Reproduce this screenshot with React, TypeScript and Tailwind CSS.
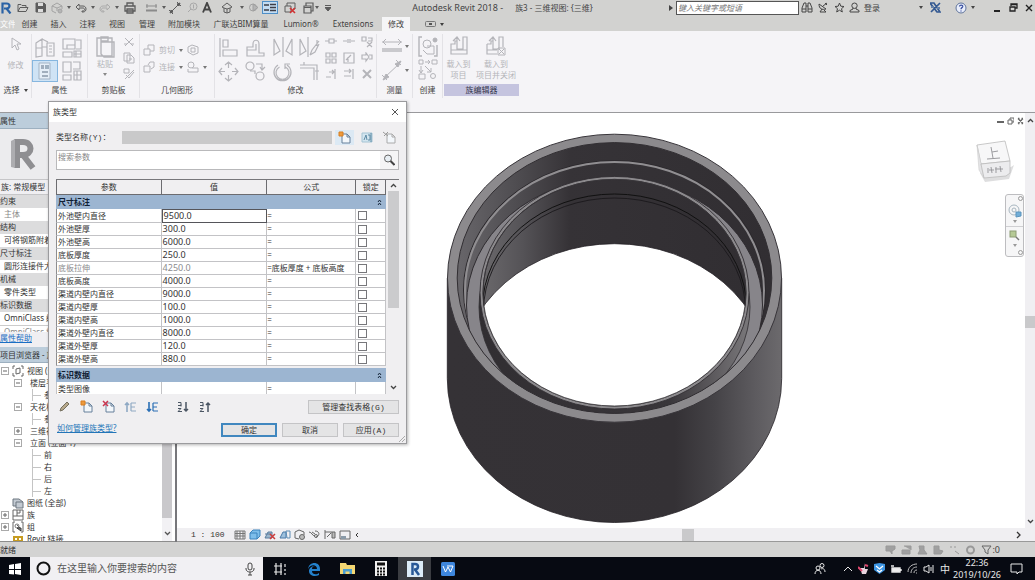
import React, { useState } from "react";

type IconProps = { w?: number; h?: number; vb?: string; className?: string; children?: React.ReactNode };

function Svg({ w = 16, h = 16, vb, className = "", children }: IconProps) {
  return (
    <svg
      width={w}
      height={h}
      viewBox={vb ?? `0 0 ${w} ${h}`}
      className={`shrink-0 ${className}`}
      fill="none"
      stroke="currentColor"
      strokeWidth="1"
      aria-hidden="true"
    >
      {children}
    </svg>
  );
}

function Caret({ className = "" }: { className?: string }) {
  return (
    <Svg w={4} h={3} className={className}>
      <path d="M0 0h4L2 3z" fill="currentColor" stroke="none" />
    </Svg>
  );
}

function Tool({ label, className = "", children }: { label: string; className?: string; children: React.ReactNode }) {
  return (
    <button type="button" aria-label={label} className={`flex shrink-0 items-center justify-center ${className}`}>
      {children}
    </button>
  );
}

/* ---------- title bar ---------- */

function QuickAccess() {
  return (
    <div className="flex h-full shrink-0 items-center text-[#5c5c5c]">
      <Tool label="Revit" className="w-[14px] justify-start">
        <Svg w={12} h={12}>
          <path d="M2.500 11.500V1.500h4c4 0 4 5 0 5H4M6.500 6.500l4 5" stroke="#2a62a5" strokeWidth="2.200" />
        </Svg>
      </Tool>
      <Tool label="打开" className="w-[18px]">
        <Svg w={12} h={10}>
          <path d="M1 8.500V1.500h3l1 1h4v2M1 8.500l2-4h8l-2 4z" />
        </Svg>
      </Tool>
      <Tool label="保存" className="w-4">
        <Svg w={11} h={11}>
          <path d="M1 1h8l1.500 1.500V10H1z" fill="#5c5c5c" />
          <path d="M3 1v3h5V1zM3 7h5v3H3z" fill="#dcdcdc" stroke="none" />
        </Svg>
      </Tool>
      <Tool label="同步" className="w-[18px] text-[#a3a3a3]">
        <Svg w={12} h={12}>
          <path d="M1 4l5-3 5 3v3M1 4v5l4 2M1 4l5 2 5-2M6 6v3" />
          <circle cx="9" cy="9" r="2" fill="#b5b5b5" />
        </Svg>
      </Tool>
      <Tool label="同步选项" className="w-[6px]"><Caret /></Tool>
      <Tool label="放弃" className="w-[18px]">
        <Svg w={12} h={10}>
          <path d="M4 1L1 4l3 3V5h4c2 0 2 3 0 3H7v1h1c4 0 4-6 0-6H4z" />
        </Svg>
      </Tool>
      <Tool label="放弃选项" className="w-[6px]"><Caret /></Tool>
      <Tool label="重做" className="w-[18px] text-[#ababab]">
        <Svg w={12} h={10}>
          <path d="M8 1l3 3-3 3V5H4C2 5 2 8 4 8h1v1H4C0 9 0 3 4 3h4z" />
        </Svg>
      </Tool>
      <Tool label="重做选项" className="w-[6px]"><Caret /></Tool>
      <Tool label="打印" className="w-5">
        <Svg w={12} h={12}>
          <path d="M3 4V1h6v3M1 4h10v5H1zM3 7h6v4H3z" strokeWidth="1.300" />
        </Svg>
      </Tool>
      <Tool label="测量" className="w-[22px] text-[#8b8b8b]">
        <Svg w={11} h={8}>
          <path d="M0 2h11M1 0v4M10 0v4" />
          <path d="M0 6.500h11" strokeWidth="2" />
        </Svg>
      </Tool>
      <Tool label="测量选项" className="w-1"><Caret /></Tool>
      <Tool label="对齐尺寸标注" className="w-[18px]">
        <Svg w={12} h={12}>
          <path d="M2 10l8-8M0 8l4 4M8 0l4 4" />
          <path d="M1 11l3-1-2-2zM11 1L8 2l2 2z" fill="currentColor" />
        </Svg>
      </Tool>
      <Tool label="标记" className="w-4 text-[#a8a8a8]">
        <Svg w={11} h={11}>
          <circle cx="6.500" cy="4.500" r="3.500" />
          <path d="M6.500 2.500v4M1 10l3-3" />
        </Svg>
      </Tool>
      <Tool label="文字" className="w-[14px]">
        <Svg w={10} h={11}>
          <path d="M1 10.500L5 1l4 9.500M2.500 7.500h5" stroke="#444" strokeWidth="1.900" />
        </Svg>
      </Tool>
      <Tool label="三维视图" className="w-[26px]">
        <Svg w={12} h={12}>
          <path d="M1 5l5-4 5 4-2 1v4l-3 1-3-1V6zM3 6l3 1 3-1M6 7v4" />
        </Svg>
      </Tool>
      <Tool label="三维选项" className="w-1"><Caret /></Tool>
      <Tool label="剖面" className="w-[18px] text-[#a0a0a0]">
        <Svg w={11} h={11}>
          <circle cx="5" cy="5.500" r="3.500" />
          <path d="M5 2v7l5-3.500z" fill="#b5b5b5" />
        </Svg>
      </Tool>
      <Tool label="细线" className="h-[13px] w-4 border border-[#4f8fc7] bg-[#c3dcf2]">
        <Svg w={12} h={9}>
          <path d="M0 2h5M0 7h5M6 1.500h6M6 4.500h6M6 7.500h6" stroke="#3d3d46" strokeWidth="1.500" />
        </Svg>
      </Tool>
      <Tool label="关闭隐藏窗口" className="w-[24px]">
        <Svg w={12} h={12}>
          <path d="M3 4V1h8v6H9M1 4h6v6H1z" />
          <path d="M6 6l5 5M11 6l-5 5" stroke="#d03232" strokeWidth="1.600" />
        </Svg>
      </Tool>
      <Tool label="切换窗口" className="w-[12px]">
        <Svg w={11} h={12}>
          <path d="M3 4V1h7v8H8M1 4h7v7H1zM1 5.500h7" strokeWidth="1.200" />
        </Svg>
      </Tool>
      <Tool label="窗口选项" className="w-[6px]"><Caret /></Tool>
      <Tool label="自定义" className="w-4">
        <Svg w={6} h={6}>
          <path d="M0 .5h6M0 2.500h6L3 6z" fill="currentColor" />
        </Svg>
      </Tool>
    </div>
  );
}

function TitleBar() {
  return (
    <header className="flex h-[15px] shrink-0 items-center bg-[#d2d2d0] text-[9px] leading-3 text-[#454545]">
      <QuickAccess />
      <div className="flex flex-1 items-center justify-center gap-3 whitespace-nowrap">
        <span>Autodesk Revit 2018 -</span>
        <span className="text-[8px]">族3 - 三维视图: {"{三维}"}</span>
      </div>
      <Svg w={4} h={6} className="mr-[3px]">
        <path d="M0 0l4 3-4 3z" fill="#444" stroke="none" />
      </Svg>
      <input
        aria-label="搜索帮助"
        placeholder="键入关键字或短语"
        className="h-[14px] w-[123px] shrink-0 border border-[#555] bg-white px-[1px] text-[8px] italic outline-none placeholder:text-[#777]"
      />
      <div className="flex shrink-0 items-center gap-1 pl-[2px]">
        <Tool label="搜索" className="w-3">
          <Svg w={12} h={11}>
            <path d="M1 10V6l2-5h2v9zM11 10V6L9 1H7v9zM5 4h2M1 7h4M7 7h4" />
          </Svg>
        </Tool>
        <Tool label="通讯中心" className="w-3">
          <Svg w={10} h={11}>
            <path d="M1 2c0 5 3 6 7 5L1 2zM5 4l4-3M4 7l-2 3h6L6 8M7 1l2 2" />
          </Svg>
        </Tool>
        <Tool label="收藏夹" className="w-3">
          <Svg w={11} h={11}>
            <path d="M5.500 1l1.300 3.200 3.200.3-2.500 2.200.8 3.300-2.800-1.800L2.700 10l.8-3.300L1 4.500l3.200-.3z" />
          </Svg>
        </Tool>
        <button type="button" className="flex items-center gap-1 text-[8px] leading-3">
          <Svg w={11} h={11}>
            <circle cx="5.500" cy="3.700" r="2.700" />
            <path d="M4 6v1L1 8.500V10h9V8.500L7 7V6" />
          </Svg>
          登录
        </button>
      </div>
      <div className="flex w-[155px] shrink-0 items-center justify-end gap-1">
        <Caret />
        <Tool label="Exchange" className="w-4">
          <Svg w={11} h={11}>
            <path d="M0 1h4l6 9H7zM10 1L1 10" stroke="#355a92" strokeWidth="1.700" />
            <path d="M1 5h3M7 6h3" stroke="#6682a9" strokeWidth="2" />
          </Svg>
        </Tool>
        <Tool label="帮助" className="ml-2 w-3">
          <Svg w={12} h={12}>
            <circle cx="6" cy="6" r="5" fill="#e9eefb" stroke="#61759b" />
            <path d="M4.500 4.500C4.500 2.500 8 2.700 7.700 4.700 7.500 5.700 6 5.700 6 7.200M6 8.500v1" stroke="#3b50a0" strokeWidth="1.300" />
          </Svg>
        </Tool>
        <Caret />
        <Tool label="最小化" className="ml-3 w-3">
          <Svg w={6} h={8}><path d="M0 7h6" stroke="#222" strokeWidth="2" /></Svg>
        </Tool>
        <Tool label="还原" className="w-3">
          <Svg w={9} h={9}><path d="M2 3V1h6v4H6M1 4h5v4H1zM2 1.500h6M1 4h5" stroke="#222" strokeWidth="1.300" /></Svg>
        </Tool>
        <Tool label="关闭" className="w-3">
          <Svg w={8} h={8}><path d="M1 1l6 6M7 1L1 7" stroke="#222" strokeWidth="1.400" /></Svg>
        </Tool>
      </div>
    </header>
  );
}

/* ---------- ribbon ---------- */

const tabs = [
  { name: "创建", cls: "w-[29px]" },
  { name: "插入", cls: "w-[29px]" },
  { name: "注释", cls: "w-[29px]" },
  { name: "视图", cls: "w-[30px]" },
  { name: "管理", cls: "w-[30px]" },
  { name: "附加模块", cls: "w-[44px]" },
  { name: "广联达BIM算量", cls: "w-[70px]" },
  { name: "Lumion®", cls: "w-[50px]" },
  { name: "Extensions", cls: "w-[54px]" },
];

function TabRow() {
  return (
    <nav className="flex h-4 shrink-0 items-end bg-[#d2d2d0] text-[8px] leading-[14px] text-[#3f3f3f]">
      <button type="button" className="w-[15px] overflow-hidden whitespace-nowrap text-left text-white">文件</button>
      {tabs.map((t) => (
        <button type="button" key={t.name} className={`shrink-0 whitespace-nowrap text-center ${t.cls}`}>
          {t.name}
        </button>
      ))}
      <button type="button" className="ml-[2px] w-7 shrink-0 bg-[#f5f5f6] text-center">修改</button>
      <button type="button" aria-label="显示选项" className="ml-[15px] flex h-[14px] items-center gap-1">
        <Svg w={11} h={6}>
          <rect x=".5" y=".5" width="10" height="5" rx="1" stroke="#777" />
          <path d="M4 3h3" stroke="#555" strokeWidth="2" />
        </Svg>
        <Caret />
      </button>
    </nav>
  );
}

function Group({ title, className, titleClass = "", children }: { title: React.ReactNode; className: string; titleClass?: string; children: React.ReactNode }) {
  return (
    <section className={`flex shrink-0 flex-col ${className}`}>
      <div className="flex h-12 gap-px pt-[2px]">{children}</div>
      <div className={`mt-[2px] flex h-3 shrink-0 items-center justify-center gap-1 text-[8px] leading-3 text-[#444] ${titleClass}`}>{title}</div>
    </section>
  );
}

function Divider() {
  return <div className="h-16 w-px shrink-0 bg-[#e3e2e6]" />;
}

const modifyLarge: { label: string; d: string }[] = [
  { label: "对齐", d: "M2 1v19M5 3h5v7H5zM5 13h14v6H5z" },
  { label: "偏移", d: "M2 19h17v-3h-5V7c0-5-6-5-6 0v3H2zM2 13h9V7" },
  { label: "镜像 - 拾取轴", d: "M11 0v20M2 2v16l6-4zM20 2v16l-6-4z" },
  { label: "镜像 - 绘制轴", d: "M9 0v20M1 2v16l6-4zM18 3v6M11 18l2-5 7-9M11 18l5-3 4-8" },
  { label: "移动", d: "M10.500 1v6M10.500 14v6M1 10.500h6M14 10.500h6M7 4l3.500-3L14 4M7 17l3.500 3 3.500-3M4 7l-3 3.500L4 14M17 7l3 3.500-3 3.500" },
  { label: "复制", d: "M9 5a4 4 0 1 0-8 0 4 4 0 0 0 8 0M19 15a4 4 0 1 0-8 0 4 4 0 0 0 8 0M11 3h6v5M15 6l2 3 3-3M5 10h5v3" },
  { label: "旋转", d: "M6 4a8.500 8.500 0 1 0 9 0M7.500 6a6.500 6.500 0 1 0 6 0M13 8V3h5" },
  { label: "修剪", d: "M1 4h17v15M1 7h14v12M5 1v3M20 10h-4" },
];

const modifySmall = [
  "M0 5h4M4 3h5v4H4zM9 5h3",
  "M0 5h4M5 3v4M7 3v4M8 5h4",
  "M1 1h4v4H1zM7 2h4v3H7M6 6l5 5M11 6l-5 5",
  "M1 1h4v4H1zM7 1h4v4H7zM1 7h4v4H1zM7 7h4v4H7z",
  "M1 1h10v10H1zM3 8l5-5M5 5v5",
  "M1 3h4V1l3 4-3 4V7H1zM8 3h3v4H8",
  "M1 9h5M10 1v10M4 4h5M7 2l2 2-2 2",
  "M1 3h7M1 8h7M10 1v10M6 1l2 2-2 2",
  "M2 2l8 8M10 2l-8 8",
];

function Ribbon() {
  return (
    <div className="flex h-[81px] shrink-0 bg-[#f5f4f7] pt-[3px] text-[8px] leading-[10px] text-[#b4b4b9]">
      <Group className="w-[31px]" title={<><span>选择</span><Caret /></>}>
        <button type="button" className="flex w-full flex-col items-center gap-2 pt-[1px]">
          <Svg w={12} h={15}><path d="M2 1v10l3-3 2 5 2-1-2-5h4z" /></Svg>
          修改
        </button>
      </Group>
      <Divider />
      <Group className="w-[55px]" title="属性">
        <div className="grid grid-cols-2 gap-x-[1px]">
          <Tool label="类型属性" className="h-[23px] w-[26px]">
            <Svg w={20} h={20}><path d="M1 5l6-4v17l-6 1zM7 1l6 3M7 9h5M12 5h7v13h-7zM14 8h3M14 11h3M14 14h3M1 10h6" strokeWidth="1.200" /></Svg>
          </Tool>
          <Tool label="族类型" className="h-[23px] w-[26px]">
            <Svg w={20} h={20}><path d="M1 1h12v10H1zM5 11V7h8M1 14h9v5H1zM14 2h5v9h-5M12 13h7v6h-7zM14 13v6M12 16h7" strokeWidth="1.200" /></Svg>
          </Tool>
          <Tool label="属性" className="h-[22px] w-[26px] border border-[#86b6df] bg-[#cfe3f5]">
            <Svg w={16} h={18}><path d="M2 1h11v16H2z" fill="#e5eef7" stroke="#a3b3c5" /><path d="M4 4h3M4 6h3M5 10h6M5 14h6" stroke="#8b99aa" strokeWidth="1.500" /><path d="M8 3h4v4H8z" fill="#9fb0c0" stroke="none" /></Svg>
          </Tool>
          <Tool label="族类别" className="h-[22px] w-[26px]">
            <Svg w={20} h={20}><path d="M1 1h8v10H1zM1 14h8v5H1zM11 1h7v7h-7M12 10h7v9h-7zM12 14h7M15 10v9" strokeWidth="1.200" /></Svg>
          </Tool>
        </div>
      </Group>
      <Divider />
      <Group className="w-[51px]" title="剪贴板">
        <button type="button" className="flex w-[34px] flex-col items-center">
          <Svg w={20} h={22}><path d="M2 2h15v18H2zM6 1h7v4H6zM6 6h13v15H9l-3-3z" strokeWidth="1.400" /></Svg>
          <span className="pt-px">粘贴</span>
          <Caret className="mt-1 text-[#888]" />
        </button>
        <div className="flex flex-col items-center gap-1">
          <Tool label="剪切" className="h-3 w-3"><Svg w={12} h={12}><path d="M2 2l8 8M10 2l-8 8M1 8h3M8 8h3" /></Svg></Tool>
          <Tool label="复制" className="h-3 w-3"><Svg w={12} h={12}><path d="M1 1h6v8H1zM4 3h4l3 3v5H4zM6 7h3" /></Svg></Tool>
          <Tool label="匹配类型" className="h-3 w-3"><Svg w={12} h={12}><path d="M1 1h5v4H1zM11 2L5 8l-3 3M3 7l3 3 5-6" /></Svg></Tool>
        </div>
      </Group>
      <Divider />
      <Group className="w-[74px]" title="几何图形">
        <div className="grid grid-cols-[17px_20px_8px_16px_8px] content-start items-center gap-y-[5px] pt-2">
          <Svg w={12} h={12} className="mx-auto"><path d="M1 5h6v6H1zM5 5V1h6v6H7" /></Svg>
          <button type="button">剪切</button>
          <Caret className="mx-auto text-[#777]" />
          <Svg w={12} h={12} className="mx-auto"><path d="M1 3l4-2 6 2v6l-5 2-5-3zM4 4h4v4H4z" /></Svg>
          <span />
          <Svg w={12} h={12} className="mx-auto"><path d="M1 5h6v6H1zM5 4l2-3h4v5L8 8" /></Svg>
          <button type="button">连接</button>
          <Caret className="mx-auto text-[#777]" />
          <Svg w={12} h={12} className="mx-auto"><circle cx="4" cy="4" r="3" /><path d="M5 7h6v4H1V8" /></Svg>
          <Caret className="mx-auto text-[#777]" />
        </div>
      </Group>
      <Divider />
      <Group className="w-[161px]" title="修改">
        <div className="grid grid-cols-4 gap-x-[5px] gap-y-[2px] pl-[2px]">
          {modifyLarge.map((m) => (
            <Tool key={m.label} label={m.label} className="w-[22px]">
              <Svg w={21} h={21}><path d={m.d} strokeWidth="1.200" /></Svg>
            </Tool>
          ))}
        </div>
        <div className="grid grid-cols-3 content-start gap-x-[6px] gap-y-1 pl-[4px]">
          {modifySmall.map((d, i) => (
            <Tool key={d} label={`修改工具 ${i + 1}`} className="w-3">
              <Svg w={12} h={12}><path d={d} strokeWidth={i === 8 ? 2 : 1.2} /></Svg>
            </Tool>
          ))}
        </div>
      </Group>
      <Divider />
      <Group className="w-[35px]" title="测量">
        <div className="grid grid-cols-[26px_4px] items-center gap-y-[2px] pl-[2px]">
          <Svg w={20} h={20} className="mx-auto"><path d="M0 5h20M4 2L1 5l3 3M16 2l3 3-3 3" /><path d="M0 13h20" strokeWidth="4" stroke="#c9c9cd" /></Svg>
          <Caret className="text-[#777]" />
          <Svg w={20} h={21} className="mx-auto"><path d="M2 18L18 3M0 15l5 5M14 0l5 5" /><path d="M1 20l6-3-3-3zM19 1l-6 3 3 3z" fill="#b4b4b9" /></Svg>
          <Caret className="text-[#777]" />
        </div>
      </Group>
      <Divider />
      <Group className="w-[29px]" title="创建">
        <div className="flex w-full flex-col items-center gap-[2px]">
          <Tool label="创建组"><Svg w={20} h={21}><path d="M4 1H1v19h3M16 20h3V9" strokeWidth="1.400" /><circle cx="9" cy="8" r="4" /><path d="M9 10h7v8H9l-4-4" /><circle cx="17" cy="4" r="2" fill="#b4b4b9" /></Svg></Tool>
          <Tool label="创建类似"><Svg w={20} h={21}><path d="M1 1h4v4H1zM14 1h5v4h-5zM7 3h5M10 1l2 2-2 2M3 7v7M1 11l2 3 2-3M7 7l6 6M13 9v4H9M1 15h6v5H1z" /><circle cx="15" cy="17" r="2.500" /></Svg></Tool>
        </div>
      </Group>
      <Divider />
      <Group className="w-[76px]" titleClass="bg-[#c5c4df] text-[#34344c] ml-px" title="族编辑器">
        <button type="button" className="flex w-[31px] flex-col items-center">
          <Svg w={18} h={20}><path d="M1 8h4V5h2v8h6V1h4v17H1zM1 14h16M3 5l4-4 3 4M7 1v5" strokeWidth="1.200" /></Svg>
          <span className="pt-[2px] leading-[11px]">载入到<br />项目</span>
        </button>
        <button type="button" className="flex w-[42px] flex-col items-center whitespace-nowrap">
          <Svg w={20} h={20}><path d="M1 8h4V5h2v8h6V1h4v10M1 8v10h10M1 14h10M3 5l4-4 3 4M7 1v5" strokeWidth="1.200" /><path d="M12 12h7v7h-7zM13 13l5 5M18 13l-5 5" /></Svg>
          <span className="pt-[2px] leading-[11px]">载入到<br />项目并关闭</span>
        </button>
      </Group>
    </div>
  );
}

/* ---------- left palettes ---------- */

const props: { t: string; kind: "h" | "r" | "m" }[] = [
  { t: "约束", kind: "h" },
  { t: "主体", kind: "m" },
  { t: "结构", kind: "h" },
  { t: "可将钢筋附着到主体", kind: "r" },
  { t: "尺寸标注", kind: "h" },
  { t: "圆形连接件大小", kind: "r" },
  { t: "机械", kind: "h" },
  { t: "零件类型", kind: "r" },
  { t: "标识数据", kind: "h" },
  { t: "OmniClass 编号", kind: "r" },
];

type Node = { t: string; pad: string; box?: "+" | "-"; icon?: "view" | "sheet" | "family" | "group" | "link" };
const tree: Node[] = [
  { t: "视图 (全部)", pad: "pl-px", box: "-", icon: "view" },
  { t: "楼层平面", pad: "pl-[14px]", box: "-" },
  { t: "参照标高", pad: "pl-[32px]" },
  { t: "天花板平面", pad: "pl-[14px]", box: "-" },
  { t: "参照标高", pad: "pl-[32px]" },
  { t: "三维视图", pad: "pl-[14px]", box: "+" },
  { t: "立面 (立面 1)", pad: "pl-[14px]", box: "-" },
  { t: "前", pad: "pl-[32px]" },
  { t: "右", pad: "pl-[32px]" },
  { t: "后", pad: "pl-[32px]" },
  { t: "左", pad: "pl-[32px]" },
  { t: "图纸 (全部)", pad: "pl-3", icon: "sheet" },
  { t: "族", pad: "pl-px", box: "+", icon: "family" },
  { t: "组", pad: "pl-px", box: "+", icon: "group" },
  { t: "Revit 链接", pad: "pl-3", icon: "link" },
];

function TreeIcon({ kind }: { kind: NonNullable<Node["icon"]> }) {
  if (kind === "view") return <Svg w={12} h={12}><path d="M3 1H1v3M9 1h2v3M3 11H1V8M9 11h2V8M4 4l4-1v5l-4 1z" stroke="#666" /></Svg>;
  if (kind === "sheet") return <Svg w={12} h={12}><path d="M1 2h6l4 3v6H4V9H1zM4 9V5h7" stroke="#6d7680" fill="#c3cad2" /></Svg>;
  if (kind === "family") return <Svg w={12} h={12}><path d="M1 1h10v10H1zM5 1v6H1M5 4h3V1M5 7h6" stroke="#666" /></Svg>;
  if (kind === "group") return <Svg w={12} h={12}><path d="M3 1H1v10h2M9 1h2v10H9M5 4l4 4" stroke="#666" /><circle cx="5" cy="5" r="2" stroke="#777" /><path d="M5 7h4v3z" fill="#999" /></Svg>;
  return <Svg w={12} h={12}><path d="M2 4h4v4H2zM6 4h4v4H6z" stroke="#c79c21" strokeWidth="2" /></Svg>;
}

function LeftPanel() {
  return (
    <aside className="flex w-[177px] shrink-0 flex-col border-r-2 border-[#77777b] bg-[#f0eff2] text-[8px] text-[#333]">
      <h2 className="h-4 shrink-0 border-b border-[#9db0c0] bg-[#bccddb] leading-[15px]">属性</h2>
      <div className="flex h-[50px] shrink-0 items-center bg-[#ececee] pl-[6px]">
        <Svg w={32} h={36}>
          <path d="M11 32V6h6c10 0 10 13 0 13h-4M17 19l10 13" stroke="#8f8f92" strokeWidth="6" />
          <path d="M5 5l4-2v29l-4-1z" fill="#adadb0" stroke="none" />
        </Svg>
      </div>
      <p className="h-4 shrink-0 border-y border-[#c6c6c8] pl-px leading-[14px] whitespace-nowrap">族: 常规模型</p>
      {props.map((p) => (
        <p
          key={p.t}
          className={`h-[13px] shrink-0 overflow-hidden whitespace-nowrap leading-3 ${
            p.kind === "h" ? "bg-[#dcdcdd]" : p.kind === "m" ? "bg-white pl-1 text-[#888]" : "bg-white pl-1"
          }`}
        >
          {p.t}
        </p>
      ))}
      <p className="h-[7px] shrink-0 overflow-hidden whitespace-nowrap border-t border-[#ccc] bg-white pl-1 leading-[11px] text-[#888]">OmniClass 标题</p>
      <a href="#help" className="h-[15px] shrink-0 leading-3 text-[#1b6fc4] underline">属性帮助</a>
      <h2 className="h-4 shrink-0 whitespace-nowrap border-b border-[#9db0c0] bg-[#bccddb] leading-[15px]">项目浏览器 - 族3</h2>
      <div className="flex min-h-0 flex-1 border-b border-[#8c8c8c] bg-white">
        <ul className="min-w-0 flex-1 overflow-hidden pt-[2px]">
          {tree.map((n, i) => (
            <li key={i} className={`flex h-3 items-center gap-[3px] whitespace-nowrap leading-3 ${n.pad}`}>
              {n.box && (
                <Svg w={8} h={8}>
                  <rect x=".5" y=".5" width="7" height="7" stroke="#aaa" />
                  <path d={n.box === "+" ? "M2 4h4M4 2v4" : "M2 4h4"} stroke="#666" />
                </Svg>
              )}
              {!n.box && !n.icon && <Svg w={9} h={12}><path d="M.5 0v12M.5 6.500H9" stroke="#c4c4c4" /></Svg>}
              {n.icon && <TreeIcon kind={n.icon} />}
              <span className={n.box && !n.icon ? "pl-[5px]" : ""}>{n.t}</span>
            </li>
          ))}
        </ul>
        <div className="mr-[3px] flex w-[10px] shrink-0 flex-col items-center justify-between bg-[#f2f1f4]">
          <div className="h-[155px] w-full bg-[#c9c8cb]" />
          <Svg w={7} h={12}><path d="M1 3l2.500 2.500L6 3" stroke="#555" strokeWidth="1.300" /></Svg>
        </div>
      </div>
    </aside>
  );
}

/* ---------- 3D model ---------- */

function Model() {
  const cx = 614.5;
  return (
    <svg width="338" height="392" viewBox="446 132 338 392" role="img" aria-label="三维模型" className="absolute top-[19px] left-[269px]">
      <defs>
        <linearGradient id="outer" gradientUnits="userSpaceOnUse" x1="447" y1="0" x2="782" y2="0">
          <stop offset="0" stopColor="#353236" />
          <stop offset=".68" stopColor="#343135" />
          <stop offset=".8" stopColor="#454347" />
          <stop offset=".92" stopColor="#5d5b5f" />
          <stop offset="1" stopColor="#6c6a6d" />
        </linearGradient>
        <linearGradient id="wall" gradientUnits="userSpaceOnUse" x1="457" y1="0" x2="772" y2="0">
          <stop offset="0" stopColor="#68666a" />
          <stop offset=".18" stopColor="#504e52" />
          <stop offset=".36" stopColor="#363337" />
          <stop offset="1" stopColor="#312e32" />
        </linearGradient>
        <linearGradient id="bore" gradientUnits="userSpaceOnUse" x1="483" y1="0" x2="746" y2="0">
          <stop offset="0" stopColor="#6a686b" />
          <stop offset=".15" stopColor="#555357" />
          <stop offset=".33" stopColor="#353236" />
          <stop offset="1" stopColor="#312e32" />
        </linearGradient>
        <linearGradient id="front" gradientUnits="userSpaceOnUse" x1="480" y1="0" x2="750" y2="0">
          <stop offset="0" stopColor="#312e32" />
          <stop offset=".7" stopColor="#39363a" />
          <stop offset="1" stopColor="#7a787b" />
        </linearGradient>
        <clipPath id="rimClip"><ellipse cx={cx} cy="278" rx="157.300" ry="135.400" /></clipPath>
        <clipPath id="boreClip"><ellipse cx={cx} cy="292.700" rx="131.500" ry="113.300" /></clipPath>
      </defs>
      <path d="M447.300 278V378.500A167.200 144 0 0 0 781.700 378.500V278z" fill="url(#outer)" stroke="#242126" strokeWidth=".8" />
      <ellipse cx={cx} cy="278.200" rx="167" ry="144" fill="#8c8a8d" stroke="#38353a" />
      <g clipPath="url(#rimClip)">
        <rect x="446" y="132" width="338" height="300" fill="url(#wall)" />
        <ellipse cx={cx} cy="290" rx="151" ry="129.300" fill="url(#wall)" stroke="#2b282c" strokeWidth="1" />
        <ellipse cx={cx} cy="290.600" rx="149.500" ry="128.600" fill="url(#wall)" stroke="#908e91" strokeWidth="2" />
        <ellipse cx={cx} cy="305" rx="148" ry="127" fill="#87858a" stroke="#302d31" strokeWidth="1" />
        <ellipse cx={cx} cy="307" rx="135.500" ry="117" fill="url(#front)" stroke="#302d31" strokeWidth=".8" />
      </g>
      <ellipse cx={cx} cy="278" rx="157.300" ry="135.400" fill="none" stroke="#312e32" />
      <ellipse cx={cx} cy="292.700" rx="134.500" ry="116.300" fill="#8c8a8d" stroke="#312e32" strokeWidth=".9" />
      <ellipse cx={cx} cy="292.700" rx="131.500" ry="113.300" fill="url(#bore)" stroke="#312e32" strokeWidth=".9" />
      <g clipPath="url(#boreClip)">
        <ellipse cx={cx} cy="308" rx="132" ry="114" fill="none" stroke="#111" strokeWidth="1" />
        <ellipse cx={cx} cy="311" rx="131" ry="113" fill="none" stroke="#1b191c" strokeWidth=".9" />
        <ellipse cx={cx} cy="377.100" rx="154.700" ry="133.400" fill="#fff" stroke="#242126" strokeWidth=".8" />
      </g>
      <ellipse cx={cx} cy="292.700" rx="131.500" ry="113.300" fill="none" stroke="#39363a" strokeWidth=".8" />
    </svg>
  );
}

function ViewCube() {
  return (
    <svg width="42" height="46" viewBox="0 0 42 46" aria-label="ViewCube" role="img" className="absolute top-[26px] right-[9px]">
      <path d="M6 34l5 9 24-3 5-14-3 2z" fill="#dededf" />
      <path d="M3 6l28-4 5 20-29 3z" fill="#f7f7f8" stroke="#bbb" strokeWidth=".8" />
      <path d="M3 6l4 19 3 14-5-8z" fill="#e4e4e6" stroke="#ccc" strokeWidth=".6" />
      <path d="M7 25l29-3v12l-4 3-22 2z" fill="#ececee" stroke="#bbb" strokeWidth=".8" />
      <path d="M17 8l2 11M13 20l13-1M18 13l6-1M14 29v5M17 28l1 6M15 31h5M22 28v6M26 27l1 6M21 30h8" stroke="#9b9b9f" fill="none" />
    </svg>
  );
}

function NavBar() {
  return (
    <div className="absolute top-[81px] right-[1px] flex h-[63px] w-[19px] flex-col items-center justify-between rounded-[3px] border border-[#bdbdc0] bg-[#f6f6f7] py-px text-[#999]">
      <Svg w={5} h={5} className="self-end"><circle cx="2.500" cy="2.500" r="2" /></Svg>
      <Tool label="控制盘" className="flex-col gap-[2px]">
        <Svg w={14} h={14}><circle cx="6" cy="6" r="5" stroke="#a8b6c0" /><circle cx="6" cy="6" r="2" stroke="#a8b6c0" /><path d="M8 8h5v4l-5 1z" fill="#72aed8" stroke="#5a94bd" /></Svg>
        <Caret />
      </Tool>
      <div className="h-px w-full bg-[#cfcfd2]" />
      <Tool label="缩放" className="flex-col gap-[3px]">
        <Svg w={11} h={11}><rect x="1" y="1" width="6" height="6" fill="#b5c995" stroke="#8c9b74" /><path d="M7 7l3 3" stroke="#777" strokeWidth="1.500" /></Svg>
        <Caret />
      </Tool>
      <Svg w={5} h={5} className="self-end"><circle cx="2.500" cy="2.500" r="2" /></Svg>
    </div>
  );
}

function ViewControls() {
  return (
    <div className="flex h-[13px] shrink-0 items-center bg-[#f0eff2] pl-[14px] text-[#666]">
      <span className="w-[43px] font-[Liberation_Mono] text-[8px] whitespace-pre text-[#333]">1 : 100</span>
      <div className="flex items-center gap-[3px]">
        <Svg w={12} h={10}><path d="M1 1h10v8H1zM1 3.500h10M1 6h10M3 1v8M6 1v8M9 1v8" stroke="#777" /></Svg>
        <Svg w={12} h={11}><path d="M1 4h7v6H1zM1 4l3-3h7v6l-3 3" fill="#7dbdea" stroke="#3c83bd" /></Svg>
        <Svg w={12} h={11}><path d="M1 9l3-6h4v6zM1 5h6" stroke="#5a7c9f" fill="#9db7cc" /><path d="M6 5l5 5M11 5l-5 5" stroke="#cc3b3b" strokeWidth="1.500" /></Svg>
        <Svg w={12} h={11}><path d="M1 9l3-6h3v6z" stroke="#4a7ba8" fill="#9dc0dd" /><path d="M7 2h4v7H8z" stroke="#5d8db5" /></Svg>
        <Svg w={12} h={11}><path d="M1 3l4-2 5 2v3M1 3v6l4 1" /><circle cx="8" cy="8" r="2.500" fill="#bbb" /></Svg>
        <Svg w={12} h={11}><path d="M0 3c3 0 3 4 6 4M3 3l3 2M6 2c5 0 5 5 1 6" /><circle cx="7" cy="7" r="1.500" /></Svg>
        <Svg w={12} h={11}><path d="M1 1v9M1 3h10M3 8l4-4M8 3v6h3V3" fill="#bbb" /></Svg>
        <Svg w={12} h={10}><path d="M1 1h10v8H1z" /><path d="M2 6h5v3H2z" fill="#8a9aa8" stroke="none" /></Svg>
        <Svg w={6} h={8}><path d="M4 2L2 4l2 2" stroke="#333" /></Svg>
      </div>
      <div className="flex flex-1 justify-center"><div className="h-3 w-3 bg-[#c9c9cb]" /></div>
      <Svg w={7} h={8} className="mr-[13px]"><path d="M2 1l3 3-3 3" stroke="#333" strokeWidth="1.300" /></Svg>
    </div>
  );
}

function Workspace() {
  return (
    <main className="flex min-w-0 flex-1 flex-col">
      <div className="flex min-h-0 flex-1 bg-white">
        <div className="relative min-w-0 flex-1 overflow-hidden">
          <Model />
          <div className="absolute top-1 right-px flex items-center gap-[3px] text-[#666]">
            <Svg w={7} h={8}><path d="M0 5h7" strokeWidth="2" /></Svg>
            <Svg w={7} h={8}><path d="M1 3h4v4H1zM3 3V1h4v4H5" /></Svg>
            <Svg w={7} h={8}><path d="M1 1.500l5 5M6 1.500l-5 5M1 1.500h1.500M4.500 1.500H6M1 6.500h1.500M4.500 6.500H6" strokeWidth="1.300" /></Svg>
          </div>
          <ViewCube />
          <NavBar />
        </div>
        <div className="flex w-[10px] shrink-0 flex-col items-center justify-between bg-[#f0eff2] text-[#444]">
          <Svg w={7} h={14}><path d="M1 9l2.500-2.500L6 9" strokeWidth="1.300" /></Svg>
          <div className="h-3 w-full bg-[#c9c9cb]" />
          <Svg w={7} h={12}><path d="M1 4l2.500 2.500L6 4" strokeWidth="1.300" /></Svg>
        </div>
      </div>
      <ViewControls />
      <div className="h-px shrink-0 bg-[#999]" />
    </main>
  );
}

/* ---------- family types dialog ---------- */

type Row = [name: string, value: string, formula?: string];
const rows: Row[] = [
  ["外池壁内直径", "9500.0"],
  ["外池壁厚", "300.0"],
  ["外池壁高", "6000.0"],
  ["底板厚度", "250.0"],
  ["底板拉伸", "4250.0", "底板厚度 + 底板高度"],
  ["底板高度", "4000.0"],
  ["渠道内壁内直径", "9000.0"],
  ["渠道内壁厚", "100.0"],
  ["渠道内壁高", "1000.0"],
  ["渠道外壁内直径", "8000.0"],
  ["渠道外壁厚", "120.0"],
  ["渠道外壁高", "880.0"],
];

function SectionRow({ title }: { title: string }) {
  return (
    <tr className="h-[14px] bg-[#9cb5d1]">
      <th colSpan={4} scope="colgroup" className="p-0 text-left font-bold text-[#102033]">
        <div className="flex items-center justify-between pr-1 pl-[2px]">
          {title}
          <Svg w={5} h={7}><path d="M1 3l1.500-2L4 3M1 6l1.500-2L4 6" stroke="#17273b" /></Svg>
        </div>
      </th>
    </tr>
  );
}

function DocIcon({ mark }: { mark: "new" | "del" | "gray" }) {
  return (
    <Svg w={13} h={13}>
      <path d="M4 3h5l3 3v6H4zM9 3v3h3" fill="#f3f7fb" stroke={mark === "gray" ? "#aaa" : "#66809b"} />
      {mark === "new" && <path d="M1 1h4v4H1z" fill="#ee9a3c" stroke="#d77f22" />}
      {mark === "del" && <path d="M1 1l5 5M6 1L1 6" stroke="#cb3650" strokeWidth="1.500" />}
      {mark === "gray" && <path d="M0 1l5 4M5 1L1 5" stroke="#999" />}
    </Svg>
  );
}

function SortIcon({ up, mode }: { up: boolean; mode: "move" | "sort" }) {
  const c = mode === "move" ? (up ? "#8fa9c4" : "#2a6fb5") : "#4a5563";
  const arrow = up ? "M3 11V2M1 4l2-2 2 2" : "M3 1v9M1 8l2 2 2-2";
  return mode === "move" ? (
    <Svg w={13} h={12}><path d={arrow} stroke={c} strokeWidth="1.600" /><path d="M7 2h5M7 6h4M7 10h5M7 2v8" stroke={c} strokeWidth="1.200" /></Svg>
  ) : (
    <Svg w={13} h={12}><path d="M1 1.500h3v3H1M1 7.500h3L1 10.500h4M4 3.500v2" stroke={c} /><path d={up ? "M9 11V2M7 4l2-2 2 2" : "M9 1v9M7 8l2 2 2-2"} stroke={c} strokeWidth="1.500" /></Svg>
  );
}

const pushBtn = "h-[14px] border border-[#c4c4c6] bg-[#e4e4e5] text-center leading-3";

function FamilyTypes() {
  const [locked, setLocked] = useState<boolean[]>(rows.map(() => false));
  const toggle = (i: number) => setLocked(locked.map((v, j) => (j === i ? !v : v)));
  return (
    <div
      role="dialog"
      aria-labelledby="ft-title"
      className="absolute top-[101px] left-12 flex w-[359px] flex-col border border-[#9b9b9e] bg-[#f0eff1] pb-[6px] text-[8px] leading-3 text-[#333] shadow-[1px_1px_3px_rgba(0,0,0,0.3)]"
    >
      <div className="flex h-5 items-center justify-between bg-white pr-[7px] pl-1">
        <h1 id="ft-title">族类型</h1>
        <Tool label="关闭"><Svg w={8} h={8}><path d="M1 1l6 6M7 1L1 7" stroke="#555" /></Svg></Tool>
      </div>
      <div className="mt-2 flex h-[15px] items-center pr-2 pl-[7px]">
        <label htmlFor="type-name" className="w-[66px] shrink-0">类型名称<span className="font-[Liberation_Mono]">(Y)</span>：</label>
        <select id="type-name" disabled className="h-[13px] min-w-0 flex-1 appearance-none bg-[#c9c9ca]"><option></option></select>
        <Tool label="新建类型" className="ml-[3px] h-[15px] w-[19px] bg-[#dce9f4]"><DocIcon mark="new" /></Tool>
        <Tool label="重命名" className="ml-1 h-[15px] w-[18px]">
          <Svg w={12} h={11}><path d="M1 1h10v9H1z" fill="#d3e5ef" stroke="#a5c4d4" /><path d="M3 8l2-5 1 5M7 3h2v5H7M10 1v9" stroke="#5d8ba5" /></Svg>
        </Tool>
        <Tool label="删除类型" className="ml-1 h-[15px] w-[18px]"><DocIcon mark="gray" /></Tool>
      </div>
      <div className="mx-[7px] mt-[5px] flex h-[20px] border border-[#b9b9bb] bg-white">
        <input aria-label="搜索参数" placeholder="搜索参数" className="h-3 min-w-0 flex-1 bg-transparent pl-px text-[8px] outline-none placeholder:text-[#888]" />
        <Tool label="搜索" className="h-full w-[18px] bg-[#f5f5f6]">
          <Svg w={12} h={12}><circle cx="5" cy="4.500" r="3.500" fill="#e7eef3" stroke="#666" /><path d="M7.500 7l4 4" stroke="#444" strokeWidth="2" /></Svg>
        </Tool>
      </div>
      <div className="mx-[7px] mt-[9px] flex h-[215px] overflow-hidden border-t border-[#77777a]">
        <div className="min-w-0 flex-1 overflow-hidden">
          <table className="w-full table-fixed border-separate border-spacing-0">
            <colgroup>
              <col className="w-[32%]" />
              <col className="w-[32%]" />
              <col className="w-[27%]" />
              <col />
            </colgroup>
            <thead>
              <tr className="h-[15px]">
                {["参数", "值", "公式", "锁定"].map((h, i) => (
                  <th key={h} scope="col" className={`border-r border-b border-[#6c6c70] p-0 font-normal ${i === 0 ? "border-l" : ""}`}>{h}</th>
                ))}
              </tr>
            </thead>
            <tbody>
              <SectionRow title="尺寸标注" />
              {rows.map(([name, value, formula], i) => {
                const dim = formula ? "text-[#8b8b8e]" : "";
                return (
                  <tr key={name} className="h-[13px] bg-white">
                    <td className={`border-r border-b border-l border-[#c3c3c6] border-l-[#8d8d90] p-0 pl-px ${dim}`}>{name}</td>
                    <td className={`p-0 pl-px text-[9px] ${i === 0 ? "border border-[#55555a]" : "border-r border-b border-[#c3c3c6]"} ${dim}`}>{value}</td>
                    <td className="border-r border-b border-[#c3c3c6] p-0 whitespace-nowrap">={formula}</td>
                    <td className="border-r border-b border-[#c3c3c6] p-0 pl-[2px]">
                      <input
                        type="checkbox"
                        aria-label={`锁定 ${name}`}
                        checked={locked[i]}
                        onChange={() => toggle(i)}
                        className="block size-[9px] appearance-none border border-[#77777b] bg-white checked:bg-[#4a7fb5]"
                      />
                    </td>
                  </tr>
                );
              })}
              <tr className="h-[2px]"><td colSpan={4} className="p-0" /></tr>
              <SectionRow title="标识数据" />
              <tr className="h-[13px] bg-white">
                <td className="border-r border-l border-[#c3c3c6] p-0 pl-px">类型图像</td>
                <td className="border-r border-[#c3c3c6] p-0" />
                <td className="border-r border-[#c3c3c6] p-0">=</td>
                <td className="border-r border-[#c3c3c6] p-0" />
              </tr>
            </tbody>
          </table>
        </div>
        <div className="flex w-[13px] shrink-0 flex-col items-center pl-px text-[#444]">
          <Svg w={7} h={11}><path d="M1 7l2.500-2.500L6 7" strokeWidth="1.300" /></Svg>
          <div className="h-[117px] w-[11px] bg-[#cbcbcd]" />
          <Svg w={7} h={12} className="mt-auto"><path d="M1 4l2.500 2.500L6 4" strokeWidth="1.300" /></Svg>
        </div>
      </div>
      <div className="mt-[5px] flex h-[15px] items-center pr-[7px] pl-[9px]">
        <div className="flex flex-1 items-center gap-[9px]">
          <Tool label="编辑参数"><Svg w={13} h={12}><path d="M2 10l1-3 6-6 2 2-6 6z" fill="#b7a88b" stroke="#75705f" /></Svg></Tool>
          <Tool label="新建参数"><DocIcon mark="new" /></Tool>
          <Tool label="删除参数"><DocIcon mark="del" /></Tool>
          <Tool label="上移"><SortIcon up mode="move" /></Tool>
          <Tool label="下移"><SortIcon up={false} mode="move" /></Tool>
          <Tool label="升序" className="ml-[9px]"><SortIcon up={false} mode="sort" /></Tool>
          <Tool label="降序"><SortIcon up mode="sort" /></Tool>
        </div>
        <button type="button" className={`w-[91px] ${pushBtn}`}>管理查找表格<span className="font-[Liberation_Mono]">(G)</span></button>
      </div>
      <div className="mt-[9px] flex gap-[5px] pr-[7px] pl-2">
        <a href="#types-help" className="-mt-px flex-1 self-start text-[#2375b8] underline">如何管理族类型?</a>
        <button type="button" className="h-[14px] w-[56px] border-2 border-[#4087bf] bg-[#e4e4e5] leading-[10px]">确定</button>
        <button type="button" className={`w-[56px] ${pushBtn}`}>取消</button>
        <button type="button" className={`w-[56px] ${pushBtn}`}>应用<span className="font-[Liberation_Mono]">(A)</span></button>
      </div>
      <Svg w={6} h={6} className="absolute right-px bottom-px"><path d="M6 0L0 6M6 3L3 6" stroke="#aaa" /></Svg>
    </div>
  );
}

/* ---------- status bar & taskbar ---------- */

function StatusBar() {
  return (
    <div className="flex h-[15px] shrink-0 items-center justify-between bg-[#d3d3d2] pr-[35px] text-[8px] text-[#333]">
      <span>就绪</span>
      <div className="flex items-center gap-[5px] text-[#999]">
        <Svg w={11} h={10}><path d="M1 1h9v3L7 6v3L5 6H1z" fill="#a0a0a0" /></Svg>
        <Svg w={11} h={10}><path d="M3 1h7v4M1 5h8v4H1z" fill="#a0a0a0" /></Svg>
        <Svg w={11} h={10}><path d="M2 1h5v4l3 4H1l2-4z" fill="#a0a0a0" /></Svg>
        <Svg w={11} h={10}><path d="M1 1h5v4l4 1-2 3H1z" fill="#a0a0a0" /></Svg>
        <Svg w={11} h={10}><path d="M1 2h2M5 2h2M6 6l4 3" /></Svg>
        <Svg w={11} h={10}><circle cx="5.500" cy="5" r="3.500" strokeWidth="2" /></Svg>
        <span className="flex items-center text-[9px] text-[#444]">
          <Svg w={11} h={10}><path d="M1 1h9L7 5v4L4 7V5z" stroke="#666" /></Svg>:0
        </span>
      </div>
    </div>
  );
}

function TaskBar() {
  return (
    <footer className="flex h-[23px] shrink-0 items-center bg-[#070a12] text-[#e8e8e8]">
      <Tool label="开始" className="w-[30px]">
        <Svg w={12} h={12}><path d="M0 2l5-1v5H0zM6 1l6-1v6H6zM0 7h5v4.500L0 11zM6 7h6v5l-6-1z" fill="#fff" stroke="none" /></Svg>
      </Tool>
      <div className="flex h-full w-[233px] shrink-0 items-center bg-[#f1f0f3] pr-2 pl-[6px]">
        <Svg w={15} h={15}><circle cx="7.500" cy="7.500" r="6" stroke="#111" strokeWidth="2" /></Svg>
        <input aria-label="搜索" placeholder="在这里输入你要搜索的内容" className="min-w-0 flex-1 bg-transparent pl-[6px] text-[10px] text-[#333] outline-none placeholder:text-[#555]" />
        <Svg w={10} h={14}><rect x="3" y="1" width="4" height="7" rx="2" stroke="#444" /><path d="M1 6v1c0 4 8 4 8 0V6M5 10v3M3 13h4" stroke="#444" /></Svg>
      </div>
      <Tool label="任务视图" className="w-[34px]">
        <Svg w={13} h={12}><path d="M2 0v12M7 0v12M0 3h8M0 9h8M11 1v3M11 6v2M11 10v2" strokeWidth="1.200" /></Svg>
      </Tool>
      <Tool label="Edge" className="w-[34px]">
        <Svg w={14} h={14}><path d="M1 7C2-1 13-1 13 7v2H5c0 4 5 4 7 2v2C8 15 2 14 2 9c0-3 3-5 6-5-2 0-3 1-3 3h5c0-5-7-5-9 0z" fill="#2381cc" stroke="none" /></Svg>
      </Tool>
      <Tool label="文件资源管理器" className="w-[33px]">
        <Svg w={15} h={13}><path d="M0 1h6l1 2h8v9H0z" fill="#f4d873" stroke="none" /><path d="M3 12V7h9v5H9.500V9.500h-4V12z" fill="#4c9ed0" stroke="none" /></Svg>
      </Tool>
      <Tool label="计算器" className="w-[34px]">
        <Svg w={12} h={15}><rect width="12" height="15" fill="#f2f2f2" stroke="none" /><path d="M2 3h8" stroke="#111" strokeWidth="3" /><path d="M2 7.500h8M2 10.500h8M2 13.500h8" stroke="#111" strokeWidth="2" strokeDasharray="2 1" /></Svg>
      </Tool>
      <Tool label="Revit" className="h-full w-[33px] bg-[#3a3c41]">
        <Svg w={16} h={16}><rect width="16" height="16" fill="#dcebf7" stroke="none" /><path d="M5.500 14V3H8c4 0 4 5 0 5.500H7M8 8.500l4 5.500" stroke="#285897" strokeWidth="2.500" /></Svg>
      </Tool>
      <Tool label="WPS" className="w-[34px]">
        <Svg w={14} h={14}><rect width="14" height="14" rx="1.500" fill="#3d86dd" stroke="none" /><path d="M2 4l2.500 6L7 5l2.500 5L12 4H6" stroke="#fff" /></Svg>
      </Tool>
      <div className="flex flex-1 items-center justify-end gap-[5px]">
        <Svg w={12} h={12} className="mr-3"><circle cx="4" cy="5" r="2" /><circle cx="8" cy="2.500" r="2" /><path d="M1 11c0-5 6-5 6 0M7 6c2-1 4 0 4 3" /></Svg>
        <Svg w={10} h={8}><path d="M1 6l4-4 4 4" /></Svg>
        <Svg w={11} h={12}><path d="M6 0v5H2l2 6h4l2-5H7z" fill="#e9d5df" stroke="none" /><path d="M0 4l4 4M7 2l3 1" stroke="#e0476e" strokeWidth="2" /></Svg>
        <Svg w={11} h={12}><path d="M0 1l5.500-1L11 1v6l-5.500 4L0 7z" fill="#3c95e3" stroke="none" /><path d="M2 3l3.500 3L9 3M3 7l2.500 2L8 7" stroke="#fff" strokeWidth="1.300" /></Svg>
        <Svg w={12} h={10}><path d="M1 2h3M2 4h8v4H2zM11 5v2" fill="#eee" strokeWidth="1.400" /></Svg>
        <Svg w={11} h={11}><path d="M1 9C1 4 5 1 10 1M4 10c0-3 2-6 6-6M7 10c0-2 1-3 3-3M9 10h1" stroke="#bbb" /></Svg>
        <Svg w={12} h={10}><path d="M1 3h2l3-2v8L3 7H1zM8 3v4M10 1v8" /></Svg>
        <span className="text-[10px] leading-3">中</span>
      </div>
      <time className="w-[54px] shrink-0 text-center text-[9px] leading-[12px] whitespace-nowrap">22:36<br />2019/10/26</time>
      <Tool label="通知" className="mr-[7px] w-6">
        <Svg w={13} h={12}><path d="M1 1h11v8H9l-2 2V9H1z" /></Svg>
      </Tool>
    </footer>
  );
}

export default function App() {
  return (
    <div className="relative flex h-screen flex-col overflow-hidden font-['Noto_Sans','Noto_Sans_CJK_SC',sans-serif]">
      <TitleBar />
      <TabRow />
      <Ribbon />
      <div className="flex min-h-0 flex-1 border-t border-[#99999c]">
        <LeftPanel />
        <Workspace />
      </div>
      <StatusBar />
      <TaskBar />
      <FamilyTypes />
    </div>
  );
}
